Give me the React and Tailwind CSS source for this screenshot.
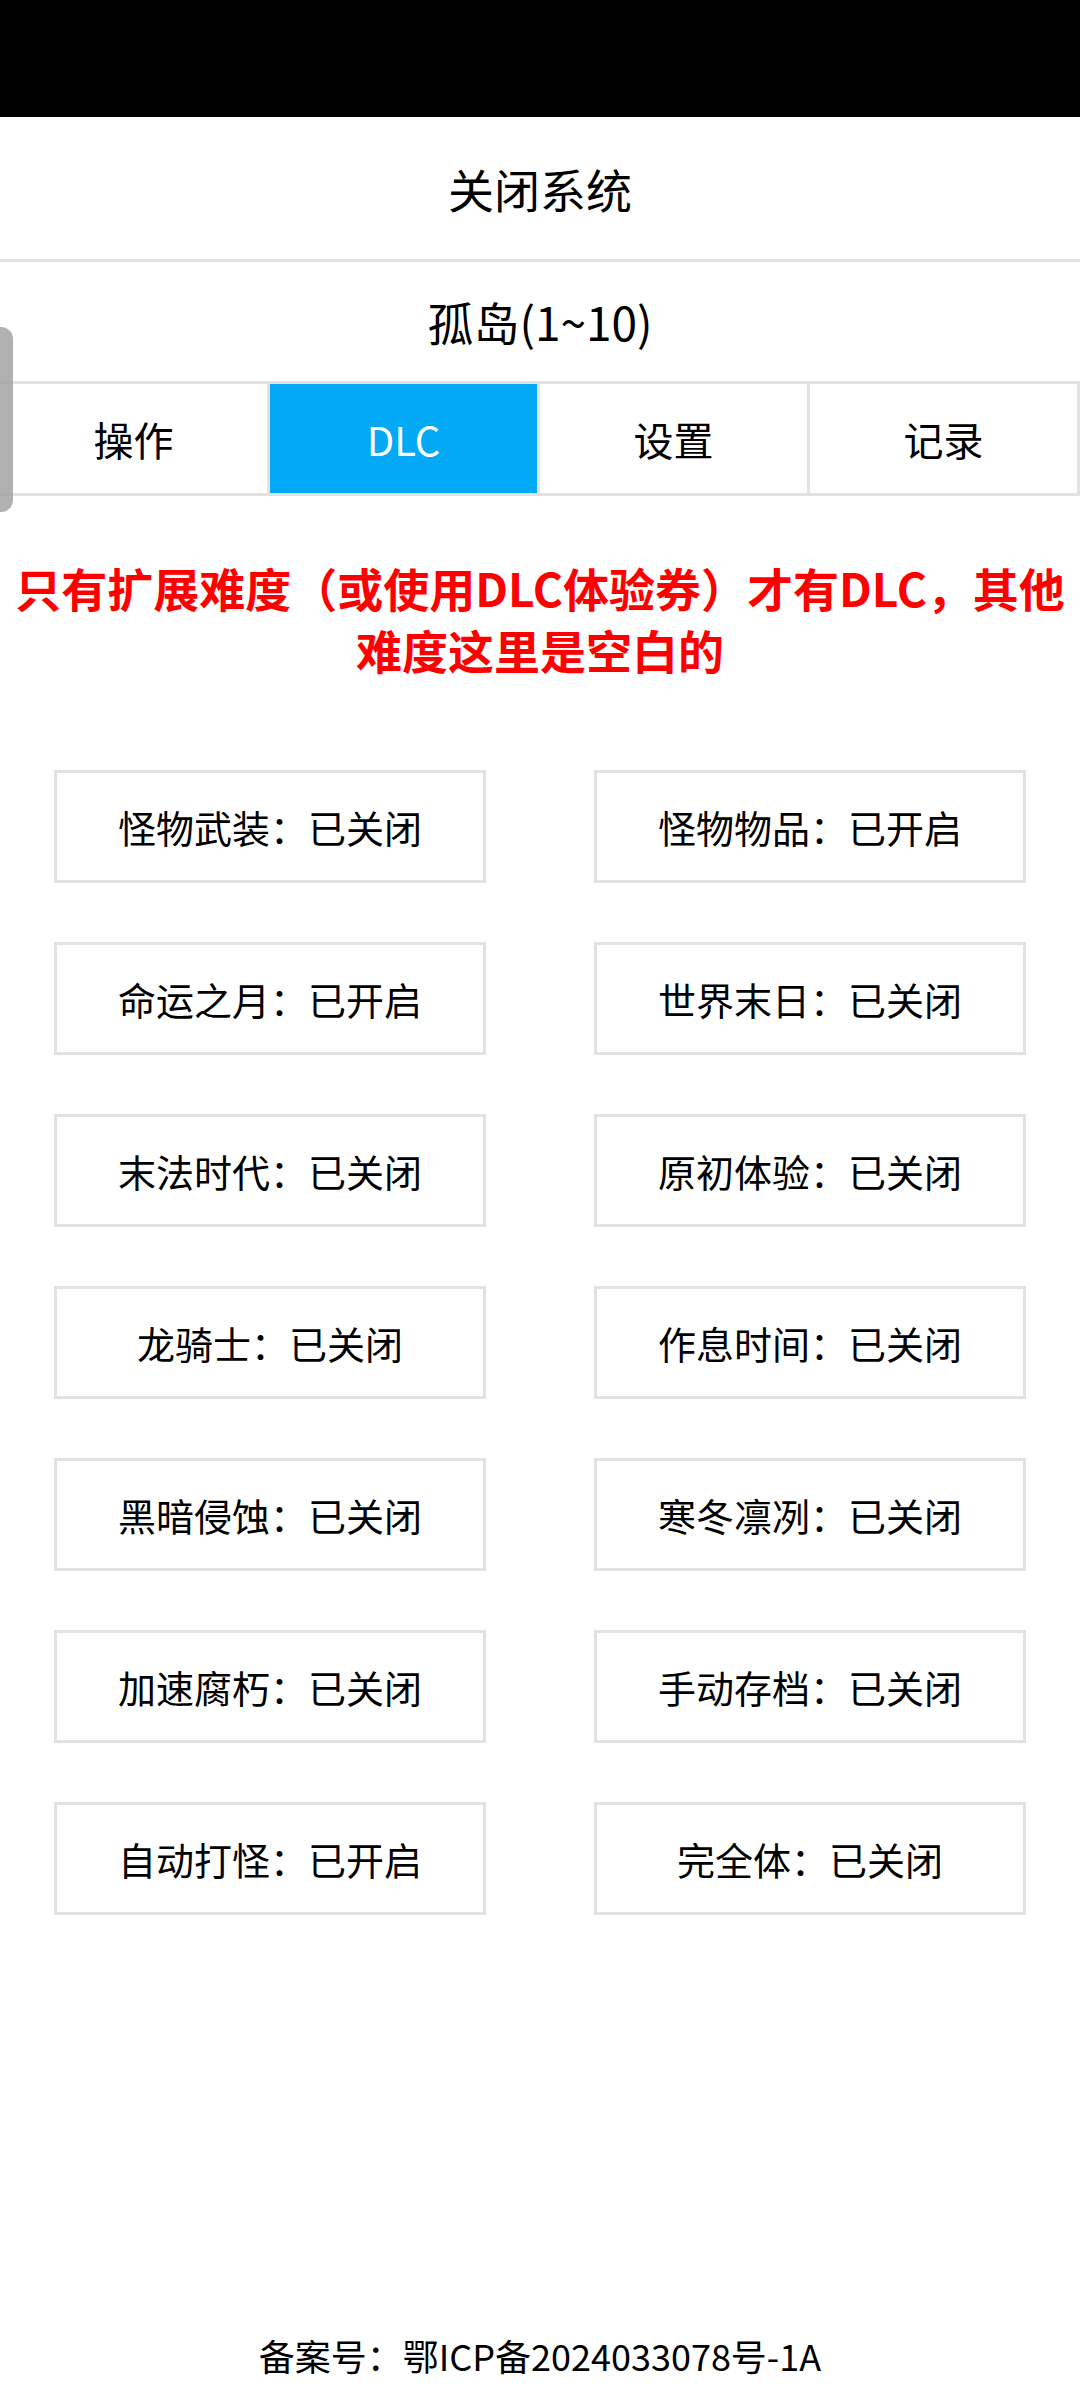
import React, { useState } from 'react';

const TABS = ['操作', 'DLC', '设置', '记录'];

const DLCS = [
  ['怪物武装', false],
  ['怪物物品', true],
  ['命运之月', true],
  ['世界末日', false],
  ['末法时代', false],
  ['原初体验', false],
  ['龙骑士', false],
  ['作息时间', false],
  ['黑暗侵蚀', false],
  ['寒冬凛冽', false],
  ['加速腐朽', false],
  ['手动存档', false],
  ['自动打怪', true],
  ['完全体', false],
];

export default function App() {
  const [activeTab, setActiveTab] = useState('DLC');

  return (
    <div
      className="relative w-[1080px] min-h-[2387px] bg-white text-black flex flex-col"
      style={{ fontFamily: '"Noto Sans CJK SC", "Noto Sans", sans-serif' }}
    >
      {/* Status bar */}
      <div className="h-[117px] bg-black shrink-0" />

      {/* Header */}
      <div className="h-[145px] flex items-center justify-center text-[46px] border-b-[3px] border-[#e2e2e2] shrink-0">
        关闭系统
      </div>

      {/* Level */}
      <div className="h-[119px] flex items-center justify-center text-[46px] shrink-0">
        孤岛(1~10)
      </div>

      {/* Tabs */}
      <div className="grid grid-cols-4 h-[115px] border-y-[3px] border-[#e2e2e2] shrink-0">
        {TABS.map(tab => (
          <button
            key={tab}
            onClick={() => setActiveTab(tab)}
            className={`flex items-center justify-center text-[40px] border-r-[3px] border-[#e2e2e2] ${
              activeTab === tab ? 'bg-[#03a9f4] text-white' : 'bg-white text-black'
            }`}
          >
            {tab}
          </button>
        ))}
      </div>

      {/* Notice */}
      <p className="mt-[60px] text-center text-[46px] leading-[62px] font-bold text-[#f00] whitespace-nowrap">
        只有扩展难度（或使用DLC体验券）才有DLC，其他
        <br />
        难度这里是空白的
      </p>

      {/* DLC list */}
      <div className="flex-1">
        <div className="mt-[90px] px-[54px] grid grid-cols-2 gap-x-[108px] gap-y-[59px]">
          {DLCS.map(([name, on]) => (
            <div
              key={name}
              className="h-[113px] border-[3px] border-[#e2e2e2] flex items-center justify-center text-[38px]"
            >
              {name}：{on ? '已开启' : '已关闭'}
            </div>
          ))}
        </div>
      </div>

      {/* Footer */}
      <div className="h-[64px] flex items-center justify-center text-[36px] shrink-0">
        备案号：鄂ICP备2024033078号-1A
      </div>

      {/* Floating side handle */}
      <div className="absolute left-0 top-[327px] w-[13px] h-[185px] rounded-r-[12px] bg-[#9e9e9e]/80" />
    </div>
  );
}
